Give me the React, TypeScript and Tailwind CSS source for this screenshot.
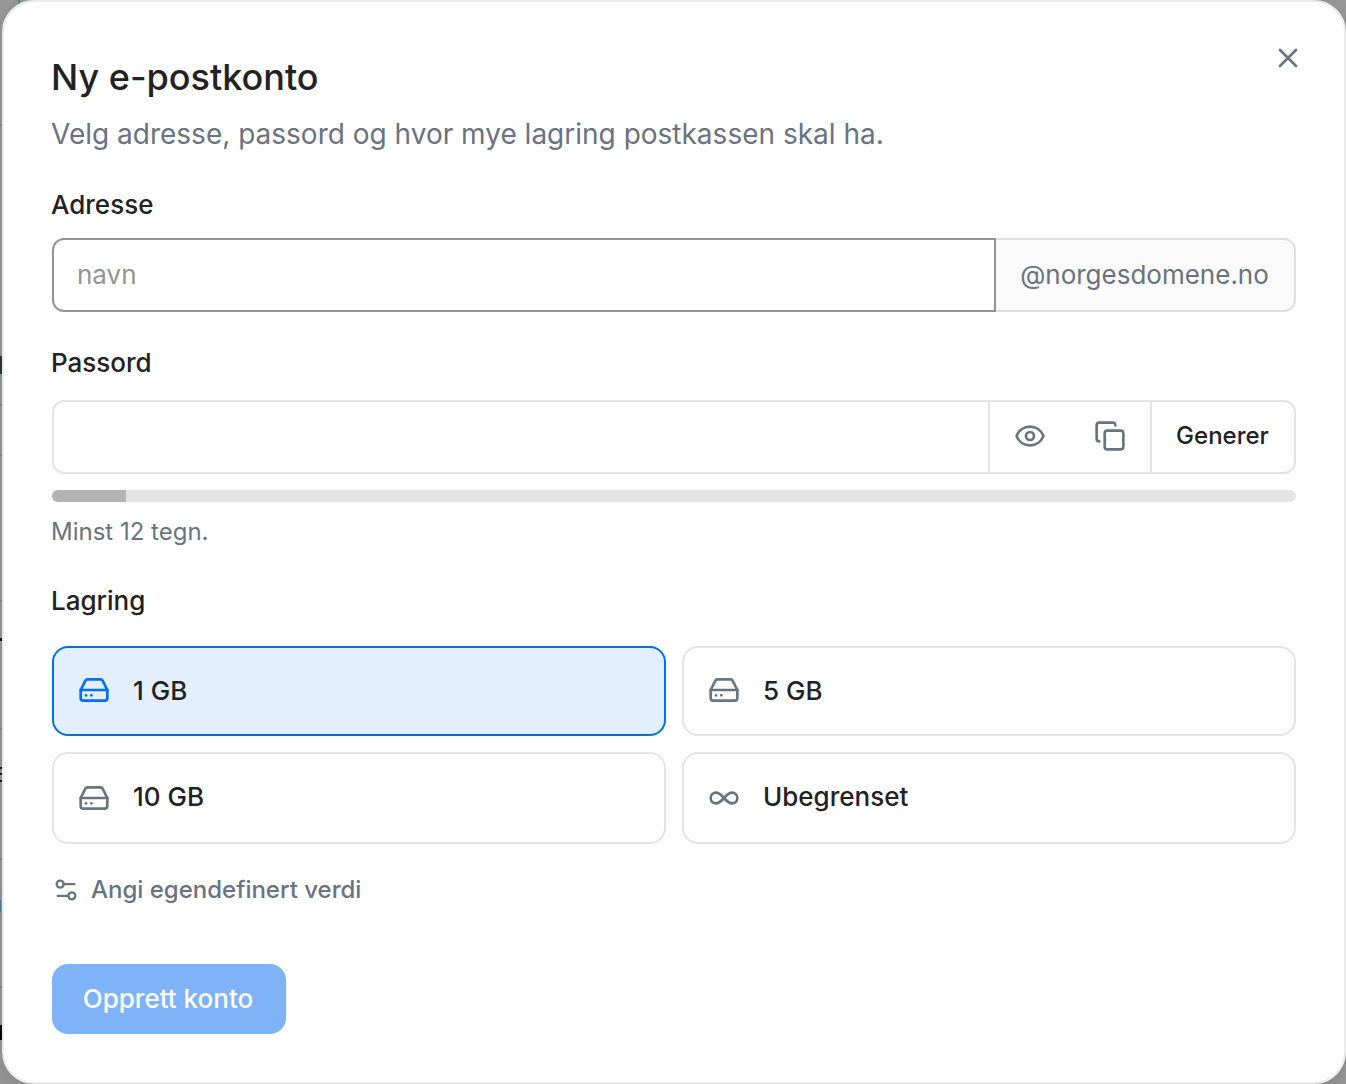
import { useState } from 'react';
import { Copy, Eye, EyeOff, HardDrive, Infinity as InfinityIcon, Settings2, X } from 'lucide-react';
import { clsx } from 'clsx';

const storageOptions = [
  { id: '1', label: '1 GB', icon: HardDrive },
  { id: '5', label: '5 GB', icon: HardDrive },
  { id: '10', label: '10 GB', icon: HardDrive },
  { id: 'unlimited', label: 'Ubegrenset', icon: InfinityIcon },
];

// Sliver of the dimmed page left of the dialog: row lines and clipped text
const pageEdge = [
  'mt-[124px] h-0.5 bg-[#888888]',
  'mt-[230px] h-[18px] bg-[#2f3540]',
  'mt-[30px] h-0.5 bg-[#858585]',
  'mt-12 h-0.5 bg-[#858585]',
  'mt-36 h-0.5 bg-[#858585]',
  'mt-9 h-[3px] bg-[#151515]',
  'mt-[87px] h-0.5 bg-[#858585]',
  'mt-[37px] h-0.5 bg-[#151515]',
  'mt-1 h-0.5 bg-[#151515]',
  'mt-[5px] h-0.5 bg-[#151515]',
  'mt-[76px] h-0.5 bg-[#858585]',
  'mt-10 h-3 w-px bg-[#4c8096]',
  'mt-[74px] h-0.5 bg-[#858585]',
  'mt-[37px] h-[15px] bg-[#050505]',
];

export default function App() {
  const [name, setName] = useState('');
  const [password, setPassword] = useState('');
  const [visible, setVisible] = useState(false);
  const [storage, setStorage] = useState('1');

  return (
    <div className="relative flex h-[1084px] w-[1346px] overflow-hidden bg-[#989898] font-['Inter',sans-serif] text-[#222222]">
      <div className="flex w-0.5 shrink-0 flex-col">
        {pageEdge.map((mark) => (
          <div key={mark} className={clsx('shrink-0', mark)} />
        ))}
      </div>
      <div className="absolute left-[18px] top-0 h-2 w-0.5 bg-[#568a79]" />

      <div className="relative flex flex-1 flex-col rounded-[32px] border-2 border-[#ebebeb] bg-white px-12 pt-[46px] shadow-[0_8px_24px_rgba(0,0,0,0.12)]">
        <button className="absolute right-10 top-10 text-[#6b7280]" aria-label="Lukk">
          <X className="size-8" />
        </button>

        <h2 className="-ml-px text-[36px] font-medium leading-[58px]">Ny e-postkonto</h2>
        <p className="-ml-px text-[28px] leading-[56px] text-[#6b7280]">
          Velg adresse, passord og hvor mye lagring postkassen skal ha.
        </p>

        <div className="flex flex-col gap-[13px] pt-[23px]">
          <label className="-ml-px text-[26px] font-medium leading-10">Adresse</label>
          <div className="flex h-[74px] text-[26px]">
            <input
              value={name}
              onChange={(e) => setName(e.target.value)}
              placeholder="navn"
              className="w-[944px] rounded-l-xl border-2 border-[#949494] pb-0.5 pl-[23px] pr-6 outline-none placeholder:text-[#949494]"
            />
            <div className="flex flex-1 items-center justify-center rounded-r-xl border-2 border-l-0 border-[#e0e0e0] bg-[#fafafa] pb-0.5 pr-px text-[#6b7280]">
              @norgesdomene.no
            </div>
          </div>
        </div>

        <div className="flex flex-col pt-[31px]">
          <label className="-ml-px text-[26px] font-medium leading-10">Passord</label>
          <div className="mt-[17px] flex h-[74px] overflow-hidden rounded-xl border-2 border-[#e4e4e4]">
            <input
              type={visible ? 'text' : 'password'}
              value={password}
              onChange={(e) => setPassword(e.target.value)}
              className="min-w-0 flex-1 px-6 text-[26px] outline-none"
            />
            <div className="flex w-[162px] border-l-2 border-[#e4e4e4] pb-0.5 text-[#6b7280]">
              <button
                className="flex w-20 items-center justify-center"
                onClick={() => setVisible(!visible)}
                aria-label="Vis passord"
              >
                {visible ? <EyeOff className="size-8" /> : <Eye className="size-8" />}
              </button>
              <button className="flex w-20 items-center justify-center" aria-label="Kopier passord">
                <Copy className="size-8" />
              </button>
            </div>
            <button className="w-36 border-l-2 border-[#e4e4e4] pb-0.5 pr-px text-[24px] font-medium">Generer</button>
          </div>
          <div className="mt-4 h-3 overflow-hidden rounded-full bg-[#e4e4e4]">
            <div className="h-full w-[74px] bg-[#b4b4b4]" />
          </div>
          <p className="-ml-px mt-2.5 text-[24px] leading-10 text-[#6b7280]">Minst 12 tegn.</p>
        </div>

        <div className="flex flex-col gap-[25px] pt-[29px]">
          <div className="-ml-px text-[26px] font-medium leading-10">Lagring</div>
          <div className="grid grid-cols-2 grid-rows-[90px_92px] gap-4">
            {storageOptions.map(({ id, label, icon: Icon }, i) => (
              <button
                key={id}
                onClick={() => setStorage(id)}
                className={clsx(
                  'flex items-center gap-[23px] rounded-2xl border-2 px-6 text-[26px] font-medium',
                  i < 2 && 'pb-0.5',
                  storage === id ? 'border-[#006fee] bg-[#e3effe]' : 'border-[#e4e4e4] bg-white'
                )}
              >
                <Icon className={clsx('size-8', storage === id ? 'text-[#006fff]' : 'text-[#6b7280]')} />
                <span className={clsx(i >= 2 && 'pb-[3px]')}>{label}</span>
              </button>
            ))}
          </div>
        </div>

        <button className="mt-[26px] flex h-10 items-center gap-[11px] text-[24px] font-medium text-[#6b7280]">
          <Settings2 className="size-7" />
          Angi egendefinert verdi
        </button>

        <button className="mt-[54px] h-[70px] w-[234px] rounded-2xl bg-[#7eb3f8] pb-0.5 pr-0.5 text-[26px] font-medium text-white">
          Opprett konto
        </button>
      </div>
    </div>
  );
}
